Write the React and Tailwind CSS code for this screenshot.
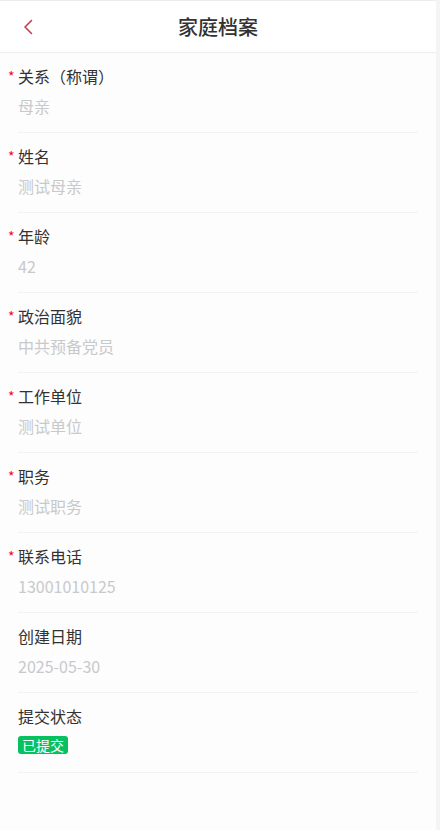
import React from "react";

const rows = [
  { label: "关系（称谓）", value: "母亲", required: true },
  { label: "姓名", value: "测试母亲", required: true },
  { label: "年龄", value: "42", required: true },
  { label: "政治面貌", value: "中共预备党员", required: true },
  { label: "工作单位", value: "测试单位", required: true },
  { label: "职务", value: "测试职务", required: true },
  { label: "联系电话", value: "13001010125", required: true },
  { label: "创建日期", value: "2025-05-30" },
];

function Row({ label, value, required, children }) {
  return (
    <div className="px-[18px]">
      <div className="h-[80px] pt-[12px] border-b border-[#f2f2f2]">
        <div className="flex items-center text-[16px] leading-[22px] text-[#323233]">
          {required && (
            <span className="-ml-[10px] w-[10px] text-[#ee0a24] text-[14px]">*</span>
          )}
          <span>{label}</span>
        </div>
        {children ? (
          children
        ) : (
          <div className="mt-[8px] text-[16px] leading-[22px] text-[#c8c9cc]">{value}</div>
        )}
      </div>
    </div>
  );
}

export default function App() {
  return (
    <div className="flex w-[440px] min-h-[830px] bg-[#f4f4f4] font-['Noto_Sans_CJK_SC','Noto_Sans',sans-serif]">
      <div className="w-[436px] min-h-[830px] bg-[#fdfdfd]">
        <div className="h-[53px] bg-white border-t border-b border-[#ededed] flex items-center">
          <div className="w-[54px] flex justify-center pl-[2px]">
            <svg width="10" height="16" viewBox="0 0 10 16" fill="none">
              <polyline points="8.5,1.5 2,8 8.5,14.5" stroke="#c4404f" strokeWidth="1.6" strokeLinecap="round" strokeLinejoin="round" />
            </svg>
          </div>
          <div className="flex-1 text-center text-[20px] font-medium text-[#323233] -ml-[54px]">
            家庭档案
          </div>
        </div>
        {rows.map((r) => (
          <Row key={r.label} {...r} />
        ))}
        <Row label="提交状态">
          <div className="mt-[9px] flex">
            <span className="block h-[18px] bg-[#07c160] text-white text-[14px] leading-[18px] px-[4px] rounded-[3px]">
              已提交
            </span>
          </div>
        </Row>
      </div>
    </div>
  );
}
